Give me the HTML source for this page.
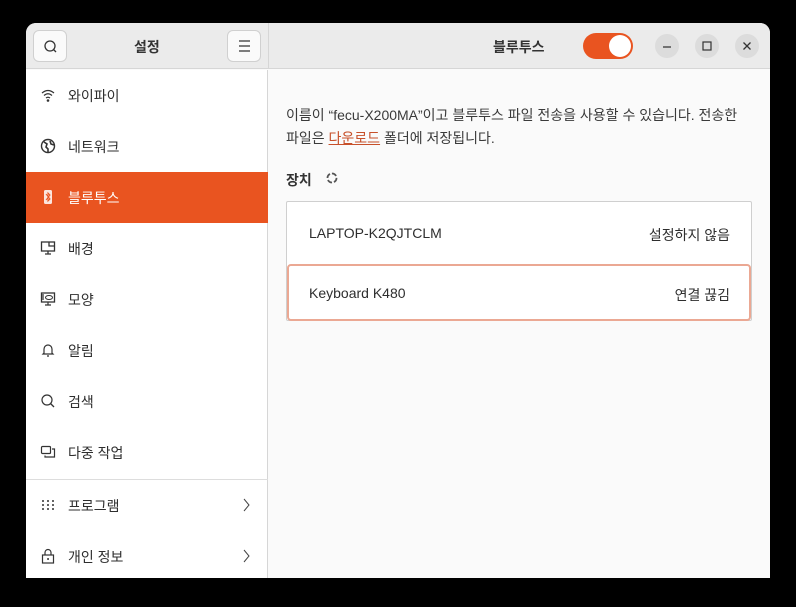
<!DOCTYPE html><html><head><meta charset="utf-8"><style>
*{margin:0;padding:0;box-sizing:border-box}
body{width:796px;height:607px;background:#000;font-family:"Liberation Sans","Noto Sans CJK KR",sans-serif;position:relative;overflow:hidden;color:#333}
.win{position:absolute;left:26px;top:23px;width:744px;height:555px;background:#fafafa;border-radius:10px 10px 0 0;overflow:hidden}
.hdr{position:absolute;left:0;top:0;width:744px;height:46px;background:#ebebeb;border-bottom:1px solid #d6d6d6}
.side{position:absolute;left:0;top:47px;width:242px;height:508px;background:#fff;border-right:1px solid #d6d6d6}
.vsep{position:absolute;left:242px;top:0;width:1px;height:46px;background:#d6d6d6}
.btn{position:absolute;width:34px;height:32px;background:#fafafa;border:1px solid #d0d0d0;border-radius:6px}
.t{position:absolute;font-size:14px;font-weight:bold;color:#333}
.row{position:absolute;left:0;width:242px;height:51px;font-size:14px;color:#2e2e2e}
.row span{position:absolute;left:42px;top:16px}
.row svg{position:absolute;left:14px;top:17px}
.sel{background:#e95420;color:#fff}
.chev{position:absolute;left:216px;top:17px}
.cb{position:absolute;width:24px;height:24px;border-radius:50%;background:#dcdcdc;top:11px}
</style></head><body>
<div class="win">
<div class="hdr">
 <div class="btn" style="left:7px;top:7px"><svg width="34" height="32"><circle cx="16" cy="15" r="5" fill="none" stroke="#333" stroke-width="1.3"/><line x1="19.5" y1="18.5" x2="22" y2="21" stroke="#333" stroke-width="1.3"/></svg></div>
 <div class="t" style="left:108px;top:14px">설정</div>
 <div class="btn" style="left:201px;top:7px"><svg width="34" height="32"><path d="M11 10h11M11 15h11M11 20h11" stroke="#333" stroke-width="1.2"/></svg></div>
 <div class="vsep"></div>
 <div class="t" style="left:467px;top:14px">블루투스</div>
 <div style="position:absolute;left:557px;top:10px;width:50px;height:26px;border-radius:13px;background:#e95420"><div style="position:absolute;right:2px;top:2px;width:22px;height:22px;border-radius:50%;background:#fff"></div></div>
 <div class="cb" style="left:629px"><svg width="24" height="24"><line x1="8" y1="13" x2="16" y2="13" stroke="#333" stroke-width="1.2"/></svg></div>
 <div class="cb" style="left:669px"><svg width="24" height="24"><rect x="8" y="8" width="8" height="8" fill="none" stroke="#333" stroke-width="1.2"/></svg></div>
 <div class="cb" style="left:709px"><svg width="24" height="24"><path d="M8.5 8.5l7 7M15.5 8.5l-7 7" stroke="#333" stroke-width="1.3"/></svg></div>
</div>
<div class="side">
 <div class="row" style="top:0"><svg width="16" height="16"><path d="M2 6q6-5 12 0M4 8.5q4-3.5 8 0M6 11q2-1.5 4 0" fill="none" stroke="#333" stroke-width="1.2"/><circle cx="8" cy="13.5" r="1.3" fill="#333"/></svg><span>와이파이</span></div>
 <div class="row" style="top:51px"><svg width="16" height="16"><circle cx="8" cy="8" r="6.5" fill="none" stroke="#333" stroke-width="1.4"/><path d="M4 4l3 2-1 3 2 2v3M10 3l1 3 3 1" fill="none" stroke="#333" stroke-width="1.6"/></svg><span>네트워크</span></div>
 <div class="row sel" style="top:102px"><svg width="16" height="16"><rect x="4" y="1" width="8" height="14" rx="1.5" fill="#fff" opacity=".85"/><path d="M6 5l4 5-2 2V4l2 2-4 5" fill="none" stroke="#e95420" stroke-width="1"/></svg><span>블루투스</span></div>
 <div class="row" style="top:153px"><svg width="16" height="16"><rect x="1.5" y="2" width="13" height="9" fill="none" stroke="#333" stroke-width="1.3"/><path d="M8 11v3M5 14h6M9 2v4h5" stroke="#333" stroke-width="1.3" fill="none"/></svg><span>배경</span></div>
 <div class="row" style="top:204px"><svg width="16" height="16"><rect x="1.5" y="2" width="13" height="9" fill="none" stroke="#333" stroke-width="1.3"/><ellipse cx="9" cy="6.5" rx="3.5" ry="2" fill="none" stroke="#333"/><path d="M8 11v3M5 14h6M2 4h2M2 6h2M2 8h2" stroke="#333" stroke-width="1.2"/></svg><span>모양</span></div>
 <div class="row" style="top:255px"><svg width="16" height="16"><path d="M4 11V7a4 4 0 018 0v4l1 1H3z" fill="none" stroke="#333" stroke-width="1.2"/><path d="M7 14h2" stroke="#333" stroke-width="1.3"/></svg><span>알림</span></div>
 <div class="row" style="top:306px"><svg width="16" height="16"><circle cx="7" cy="7" r="5" fill="none" stroke="#333" stroke-width="1.2"/><line x1="10.5" y1="10.5" x2="14" y2="14" stroke="#333" stroke-width="1.3"/></svg><span>검색</span></div>
 <div class="row" style="top:357px"><svg width="16" height="16"><rect x="1.5" y="2.5" width="9" height="7" rx="1" fill="none" stroke="#333" stroke-width="1.2"/><path d="M12 5h2.5v8H5v-1.5" fill="none" stroke="#333" stroke-width="1.2"/></svg><span>다중 작업</span></div>
 <div style="position:absolute;left:0;top:409px;width:242px;height:1px;background:#ddd"></div>
 <div class="row" style="top:410px"><svg width="16" height="16"><g fill="#333"><circle cx="3" cy="4" r="1"/><circle cx="8" cy="4" r="1"/><circle cx="13" cy="4" r="1"/><circle cx="3" cy="8" r="1"/><circle cx="8" cy="8" r="1"/><circle cx="13" cy="8" r="1"/><circle cx="3" cy="12" r="1"/><circle cx="8" cy="12" r="1"/><circle cx="13" cy="12" r="1"/></g></svg><span>프로그램</span><svg class="chev" width="10" height="16" style="left:216px"><path d="M2 2l5 6-5 6" fill="none" stroke="#444"/></svg></div>
 <div class="row" style="top:461px"><svg width="16" height="16"><rect x="2.5" y="7" width="11" height="8" fill="none" stroke="#333" stroke-width="1.2"/><path d="M5 7V4.5a3 3 0 016 0V7" fill="none" stroke="#333" stroke-width="1.2"/><rect x="7.3" y="10" width="1.5" height="2" fill="#333"/></svg><span>개인 정보</span><svg class="chev" width="10" height="16" style="left:216px"><path d="M2 2l5 6-5 6" fill="none" stroke="#444"/></svg></div>
</div>
<div style="position:absolute;left:260px;top:81px;font-size:14px;line-height:23px;color:#3a3a3a;width:462px">이름이 “fecu-X200MA”이고 블루투스 파일 전송을 사용할 수 있습니다. 전송한<br>파일은 <span style="color:#c7502a;text-decoration:underline">다운로드</span> 폴더에 저장됩니다.</div>
<div style="position:absolute;left:260px;top:147px;font-size:14px;font-weight:bold;color:#333">장치</div>
<svg style="position:absolute;left:299px;top:148px" width="14" height="14"><circle cx="7" cy="7" r="4.5" fill="none" stroke="#555" stroke-width="1.8" stroke-dasharray="5 2"/></svg>
<div style="position:absolute;left:260px;top:178px;width:466px;height:120px;background:#fff;border:1px solid #cfcfcf;border-radius:2px"></div>
<div style="position:absolute;left:283px;top:202px;font-size:14px;color:#2e2e2e">LAPTOP-K2QJTCLM</div>
<div style="position:absolute;right:40px;top:202px;font-size:14px;color:#2e2e2e">설정하지 않음</div>
<div style="position:absolute;left:261px;top:241px;width:464px;height:57px;border:2px solid #eba893;border-radius:4px"></div>
<div style="position:absolute;left:283px;top:262px;font-size:14px;color:#2e2e2e">Keyboard K480</div>
<div style="position:absolute;right:40px;top:262px;font-size:14px;color:#2e2e2e">연결 끊김</div>
</div>
</body></html>
